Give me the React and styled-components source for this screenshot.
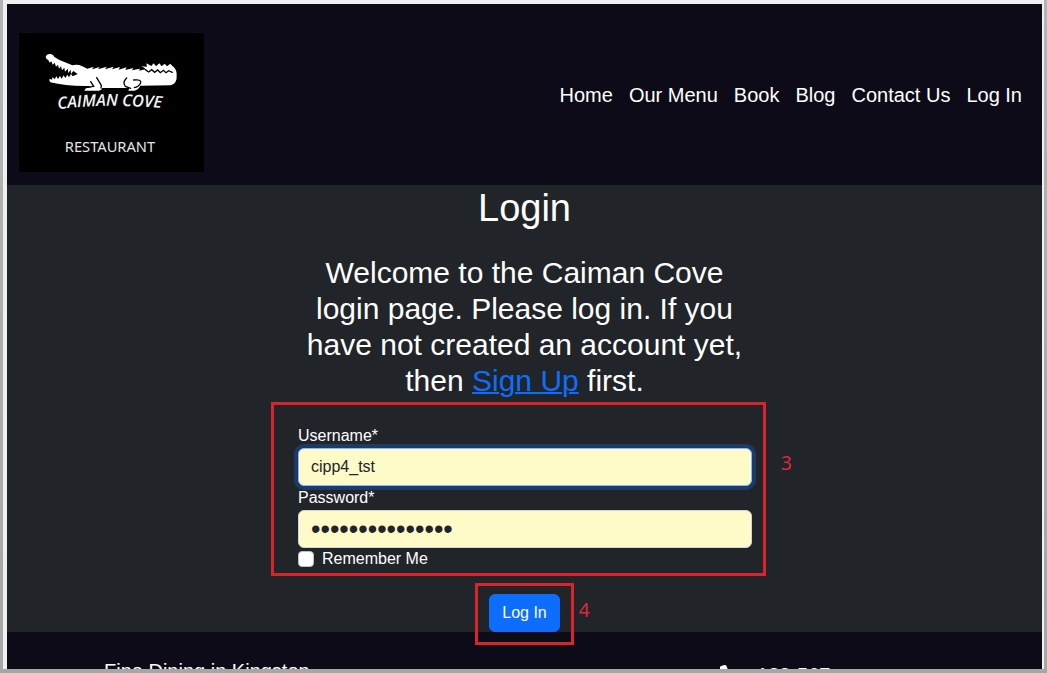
import React from "react";
import styled, { createGlobalStyle } from "styled-components";
import { FaPhone } from "react-icons/fa6";

const GlobalStyle = createGlobalStyle`
  *, *::before, *::after { box-sizing: border-box; }
  body {
    margin: 0;
    background: #b4b4b4;
    color: #fff;
    font-family: "Liberation Sans", Arial, sans-serif;
    font-size: 16px;
    line-height: 24px;
  }
`;

const Frame = styled.div`
  height: 100vh;
  padding: 0 3px 4px;
  background: linear-gradient(to bottom, #b4b4b4, #a6a6a4);
`;

const Page = styled.div`
  height: 100%;
  display: flex;
  flex-direction: column;
  overflow: hidden;
  border: solid #f0f0f2;
  border-width: 4px 2px 0 4px;
  background: #0e0b18;
`;

const Header = styled.header`
  flex: none;
  display: flex;
  align-items: center;
  justify-content: space-between;
  padding: 29px 20px 13px 12px;
  background: #0e0b18;
`;

const LogoLink = styled.a`
  display: block;
  background: #000;
  svg { display: block; }
`;

const Nav = styled.nav`
  display: flex;
  gap: 16px;
  padding-bottom: 16px;
`;

const NavLink = styled.a`
  color: #fff;
  font-size: 20px;
  line-height: 30px;
  text-decoration: none;
`;

const Main = styled.main`
  flex: none;
  display: flex;
  flex-direction: column;
  align-items: center;
  background: #212529;
`;

const Title = styled.h1`
  margin: 0 0 24px;
  font-size: 38px;
  font-weight: 400;
  line-height: 46px;
`;

const Intro = styled.p`
  width: 454px;
  max-width: 100%;
  margin: 0 0 3px;
  font-size: 30px;
  line-height: 36px;
  text-align: center;
`;

const SignUp = styled.a`
  color: #0d6efd;
  text-decoration-thickness: 2px;
`;

const Form = styled.form`
  display: flex;
  flex-direction: column;
  align-items: center;
`;

const Marked = styled.div`
  position: relative;
  padding: ${(p) => p.$padding};
  border: 3px solid #d9242b;
`;

const FieldsSlot = styled.div`
  padding-right: 12px;
`;

const SubmitSlot = styled.div`
  margin: 7px 0 -13px;
`;

const MarkNumber = styled.span`
  position: absolute;
  left: 100%;
  top: ${(p) => p.$top};
  margin-left: ${(p) => p.$gap};
  color: #e0263c;
  font-family: "Noto Sans", sans-serif;
  font-size: 19px;
  line-height: 24px;
`;

const Fields = styled.div`
  display: flex;
  flex-direction: column;
  width: 454px;
  max-width: 100%;
`;

const Label = styled.label`
  line-height: 24px;
`;

const Input = styled.input`
  height: 38px;
  padding: 0 12px;
  border: 1px solid #ced4da;
  border-radius: 6px;
  outline: 0;
  background: #fffbc8;
  color: #212529;
  font: inherit;
  &:focus {
    border-color: #86b7fe;
    box-shadow: 0 0 0 4px rgba(13, 110, 253, 0.3);
  }
  &[type="password"] {
    font-size: 27px;
  }
`;

const CheckRow = styled.label`
  display: flex;
  align-items: center;
  gap: 8px;
  line-height: 22px;
`;

const Checkbox = styled.input`
  appearance: none;
  width: 16px;
  height: 16px;
  margin: 0;
  border: 1px solid #bfbfbf;
  border-radius: 4px;
  background: #fff;
  &:checked { background: #0d6efd; }
`;

const Submit = styled.button`
  display: block;
  height: 38px;
  padding: 0 12px;
  border: 1px solid #0d6efd;
  border-radius: 6px;
  background: #0d6efd;
  color: #fff;
  font: inherit;
`;

const Footer = styled.footer`
  flex: none;
  display: grid;
  grid-template-columns: 1fr 1fr;
  padding-top: 24px;
  font-size: 20px;
  line-height: 30px;
`;

const Tagline = styled.p`
  margin: 0;
  padding-left: 97px;
`;

const Phone = styled.p`
  display: flex;
  align-items: center;
  justify-content: center;
  gap: 17px;
  margin: 4px 0 0;
  padding-right: 16px;
`;

const links = ["Home", "Our Menu", "Book", "Blog", "Contact Us", "Log In"];

function Logo() {
  return (
    <svg width="185" height="139" viewBox="57 99 555 417" role="img" aria-label="Caiman Cove Restaurant">
      <path
        fill="#fff"
        d="M137 171Q140 161 151 162Q162 165 162 170Q176 180 195 187L217 196Q232 192 247 199L262 206L281 200L276 208L299 201L294 208L320 200L315 208L341 200L336 208L360 201L356 209L380 202L376 210L400 204L396 211L420 206L417 212L436 208L434 204L424 199L441 200L439 190L454 198L461 190L468 199L478 190L485 199L494 191L501 199L511 191L518 199Q530 207 530 224Q532 251 512 256L421 257Q414 271 402 272H385L388 264H306Q306 270 296 272H253L258 264L274 262L266 258Q196 259 151 247Q146 241 149 236L156 239L158 231L164 238L169 229L174 237L180 228L185 236L191 226L196 234L202 224L207 232L213 222L218 229L233 222L220 213L213 222L212 209L205 219L203 206L195 215L193 203L186 211L183 199L177 206L174 194L168 200L164 188L158 194L154 184L149 188L145 180Q139 180 137 171Z"
      />
      <path
        fill="none"
        stroke="#000"
        strokeWidth="4"
        strokeLinecap="round"
        d="M290 233L304 256L303 264M272 245L281 259L258 263M380 234Q366 247 376 259L392 265M401 240Q425 237 422 249Q415 261 403 263M436 209L446 216L455 209L464 217L473 210L481 218L490 211L498 218L506 212L517 217"
      />
      <path id="logo-arc" fill="none" d="M174 328Q335 306 540 330" />
      <text
        fill="#f4f4f4"
        fontFamily="'Open Sans', sans-serif"
        fontSize="49"
        fontStyle="italic"
        fontWeight="600"
      >
        <textPath href="#logo-arc">CAIMAN COVE</textPath>
      </text>
      <text x="330" y="456" textAnchor="middle" fill="#e4e4e4" fontFamily="'Noto Sans', sans-serif" fontSize="44">
        RESTAURANT
      </text>
    </svg>
  );
}

export default function App() {
  return (
    <>
      <GlobalStyle />
      <Frame>
        <Page>
          <Header>
            <LogoLink href="#home"><Logo /></LogoLink>
            <Nav>
              {links.map((name) => (
                <NavLink key={name} href="#">{name}</NavLink>
              ))}
            </Nav>
          </Header>
          <Main>
            <Title>Login</Title>
            <Intro>
              Welcome to the Caiman Cove login page. Please log in. If you have not created an account
              yet, then <SignUp href="#signup">Sign Up</SignUp> first.
            </Intro>
            <Form onSubmit={(e) => e.preventDefault()}>
              <FieldsSlot>
                <Marked $padding="19px 11px 3px 24px">
                  <Fields>
                    <Label htmlFor="username">Username*</Label>
                    <Input id="username" type="text" defaultValue="cipp4_tst" autoFocus />
                    <Label htmlFor="password">Password*</Label>
                    <Input id="password" type="password" defaultValue="caimancove12345" />
                    <CheckRow>
                      <Checkbox type="checkbox" />
                      Remember Me
                    </CheckRow>
                  </Fields>
                  <MarkNumber $top="46px" $gap="18px">3</MarkNumber>
                </Marked>
              </FieldsSlot>
              <SubmitSlot>
                <Marked $padding="8px 11px 10px">
                  <Submit type="submit">Log In</Submit>
                  <MarkNumber $top="12px" $gap="8px">4</MarkNumber>
                </Marked>
              </SubmitSlot>
            </Form>
          </Main>
          <Footer>
            <Tagline>Fine Dining in Kingston</Tagline>
            <Phone>
              <FaPhone size={20} />
              123-567
            </Phone>
          </Footer>
        </Page>
      </Frame>
    </>
  );
}
